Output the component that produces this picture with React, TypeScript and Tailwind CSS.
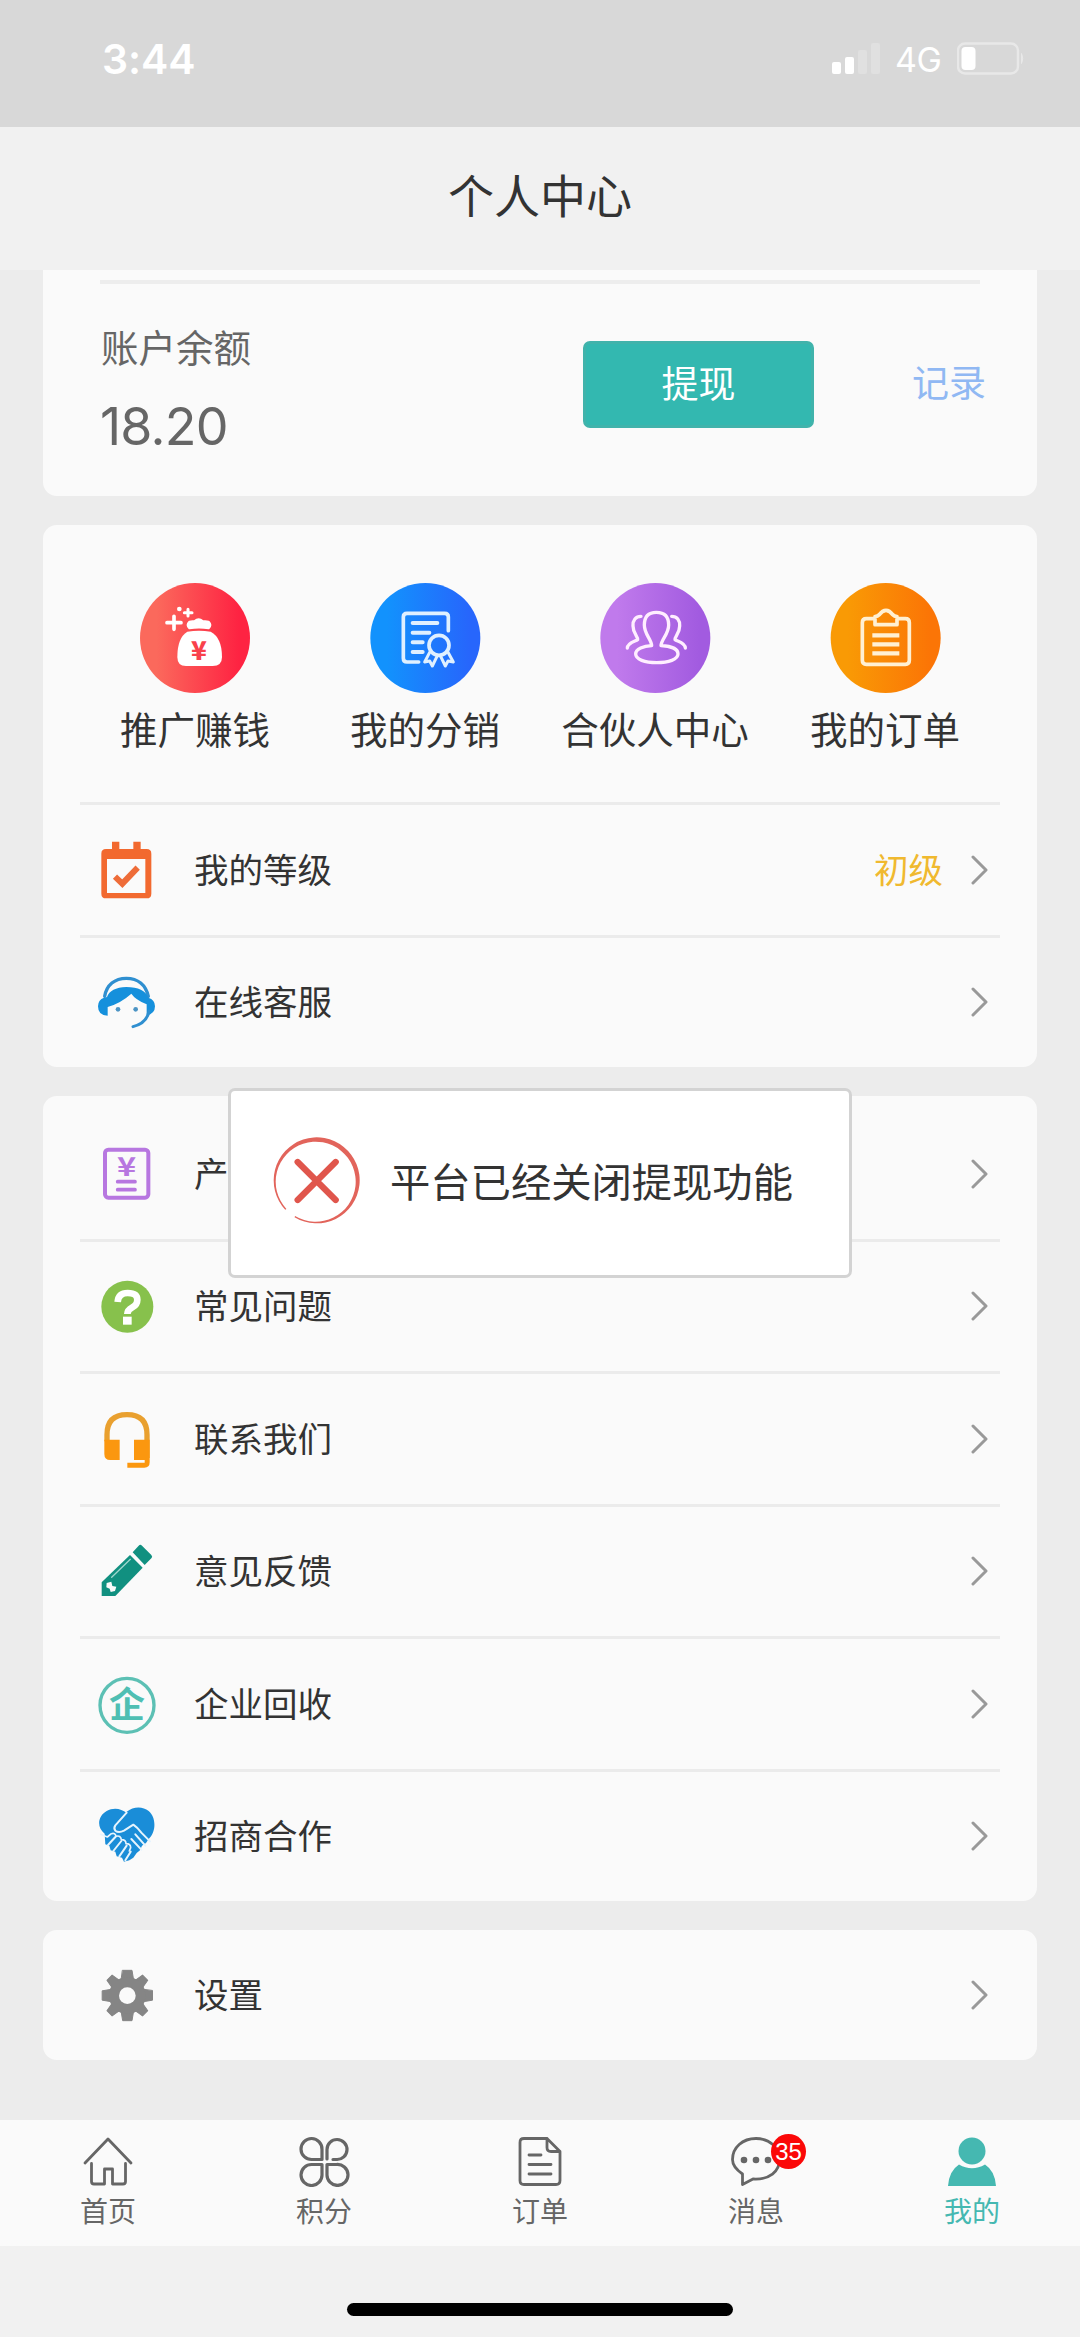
import type { ReactNode } from 'react';

const CJK = "font-['Noto_Sans_CJK_SC',sans-serif]";

/* ---------- status bar ---------- */

function StatusBar() {
  return (
    <div className="flex h-[127px] items-start justify-between bg-[#d8d8d8] pl-[102px] pr-[55px] text-white">
      <span className="mt-[36px] font-['Inter',sans-serif] text-[41px] leading-[46px] font-semibold tracking-[-0.1px]">3:44</span>
      <div className="mt-[42px] flex items-start">
        <svg className="mt-px block h-[32px] w-[48px]" viewBox="0 0 48 32">
          <rect x="0" y="19" width="9" height="12" rx="2" fill="#fff" />
          <rect x="13" y="14" width="9" height="17" rx="2" fill="#fff" />
          <rect x="26" y="7" width="9" height="24" rx="2" fill="#e0e0e0" />
          <rect x="39" y="0" width="9" height="31" rx="2" fill="#e0e0e0" />
        </svg>
        <span className="mr-[16px] ml-[15px] w-[46px] font-['Inter',sans-serif] text-[34px] leading-[36px] tracking-[-0.5px]">4G</span>
        <svg className="block h-[34px] w-[68px]" viewBox="0 0 68 34">
          <rect x="1" y="1.5" width="60" height="30" rx="7" fill="none" stroke="#e8e8e8" strokeWidth="2.4" />
          <rect x="4.500" y="5" width="14" height="23" rx="4" fill="#fff" />
          <path d="M64.500 11.500q2.500 5 0 10z" fill="#e8e8e8" stroke="#e8e8e8" />
        </svg>
      </div>
    </div>
  );
}

/* ---------- shortcut icons ---------- */

function Disc({ id, from, to, viewBox, cx, cy, children }: { id: string; from: string; to: string; viewBox: string; cx: number; cy: number; children: ReactNode }) {
  return (
    <svg className="block size-[112px]" viewBox={viewBox} fill="none" strokeLinecap="round" strokeLinejoin="round">
      <defs>
        <linearGradient id={id}>
          <stop offset="0.150" stopColor={from} />
          <stop offset="0.900" stopColor={to} />
        </linearGradient>
      </defs>
      <circle cx={cx} cy={cy} r="165" fill={`url(#${id})`} />
      {children}
    </svg>
  );
}

const BagIcon = (
  <Disc id="gRed" from="#fb695c" to="#fe2342" viewBox="117 65 336 336" cx={285} cy={233}>
    <g stroke="#fff" strokeWidth="11">
      <path d="M222 168v39M201 187h42" />
      <path d="M264 147v20M253 157h23" strokeWidth="9" />
    </g>
    <circle cx="238" cy="146" r="7" fill="#fff" />
    <path d="M268 184q12-1 16-2 12-10 24 0 6 1 18 2 10 10 0 20-29-5-58 0-10-10 0-20z" fill="#fff" stroke="#fff" strokeWidth="6" />
    <path d="M262 214q35-6 70 0 34 18 34 76 0 27-28 27h-80q-26 0-26-27 0-58 30-76z" fill="#fff" />
    <text x="297" y="298" textAnchor="middle" fontFamily="Noto Sans CJK SC" fontWeight="900" fontSize="78" fill="#f9414b">¥</text>
  </Disc>
);

const CertificateIcon = (
  <Disc id="gBlue" from="#1292fd" to="#2766fc" viewBox="806 65 336 336" cx={975} cy={233}>
    <path d="M1044 211v-41q0-11-11-11H920q-11 0-11 11v124q0 11 11 11h35" stroke="#dff0ff" strokeWidth="11" />
    <path d="M937 188h74M937 217h50M937 246h30M937 275h30" stroke="#dff0ff" strokeWidth="12" />
    <circle cx="1016" cy="255" r="30" stroke="#dff0ff" strokeWidth="11" />
    <path d="M988 276l-15 29 15-3 8 15 14-29M1043 276l16 29-16-3-8 15-14-29" stroke="#dff0ff" strokeWidth="9" />
  </Disc>
);

const PartnersIcon = (
  <Disc id="gPurple" from="#c07aec" to="#a25be0" viewBox="177 65 336 336" cx={346} cy={233}>
    <g stroke="#ffeeff" strokeWidth="10">
      <path d="M335 256c-1-20-22-34-22-62 0-28 15-38 36-38s37 10 37 38c0 28-22 42-23 62 28 1 51 9 51 25 0 16-28 26-64 26s-63-10-63-26c0-16 24-24 48-25z" />
      <path d="M303 168c-16 0-25 12-24 29 0 24 16 33 14 41-7 5-30 8-31 25" />
      <path d="M395 168c16 0 25 12 24 29 0 24-16 33-14 41 7 5 30 8 31 25" />
    </g>
  </Disc>
);

const ClipboardIcon = (
  <Disc id="gOrange" from="#f99a05" to="#fb7506" viewBox="868 65 336 336" cx={1038} cy={233}>
    <g stroke="#fff0d2">
      <path d="M1000 175h-20q-12 0-12 12v113q0 12 12 12h117q12 0 12-12V187q0-12-12-12h-20" strokeWidth="11" />
      <path d="M1006 193v-24q8-1 13-6 9-13 20-13t20 13q5 5 13 6v24z" strokeWidth="11" />
      <path d="M998 225h81M998 252h81M998 279h81" strokeWidth="13" strokeLinecap="butt" />
    </g>
  </Disc>
);

const shortcuts = [
  { label: '推广赚钱', icon: BagIcon },
  { label: '我的分销', icon: CertificateIcon },
  { label: '合伙人中心', icon: PartnersIcon },
  { label: '我的订单', icon: ClipboardIcon },
];

/* ---------- row icons ---------- */

function RowSvg({ viewBox, children }: { viewBox: string; children: ReactNode }) {
  return (
    <svg className="block size-[60px] shrink-0" viewBox={viewBox} fill="none" strokeLinecap="round" strokeLinejoin="round">
      {children}
    </svg>
  );
}

const LevelIcon = (
  <RowSvg viewBox="111 177 180 180">
    <path fillRule="evenodd" d="M156 182h22v22h42v-22h22v22h18q14 0 14 14v120q0 14-14 14H138q-14 0-14-14V218q0-14 14-14h18zM141 234v102h115V234z" fill="#f2692f" />
    <path d="M165 287l22 21 46-48" stroke="#ee6c38" strokeWidth="18" strokeLinecap="butt" strokeLinejoin="miter" />
  </RowSvg>
);

const AgentIcon = (
  <RowSvg viewBox="111 575 180 180">
    <path d="M134 648c6-34 30-54 65-54s58 20 66 54" stroke="#2f8fd0" strokeWidth="10" />
    <path d="M132 652q-18 6-18 26 0 28 29 28v-26q40-12 71-40 12 18 46 32v34q25-6 25-28 0-20-20-26-12-32-66-32-48 2-58 30z" fill="#1590dc" />
    <path d="M267 692q-6 36-48 47" stroke="#2f8fd0" strokeWidth="9" />
    <circle cx="174" cy="687" r="7" fill="#4c94c4" />
    <circle cx="227" cy="687" r="7" fill="#4c94c4" />
  </RowSvg>
);

const ReceiptIcon = (
  <RowSvg viewBox="81 75 180 180">
    <rect x="105" y="92" width="130" height="144" rx="10" stroke="#b777e0" strokeWidth="12" />
    <path d="M143 188h52M143 212h52" stroke="#b777e0" strokeWidth="11" />
    <g transform="translate(170 0) scale(1.250 1)">
      <text x="0" y="171" textAnchor="middle" fontFamily="Noto Sans CJK SC" fontWeight="700" fontSize="78" fill="#b777e0">¥</text>
    </g>
  </RowSvg>
);

const HelpIcon = (
  <RowSvg viewBox="81 470 180 180">
    <circle cx="172" cy="562" r="78" fill="#87c14c" />
    <path d="M143 548q2-27 30-27 29 0 29 20 0 15-15 23-15 8-15 20" stroke="#fff" strokeWidth="20" strokeLinecap="butt" />
    <rect x="159" y="592" width="26" height="24" fill="#fff" />
  </RowSvg>
);

const HeadsetIcon = (
  <RowSvg viewBox="81 868 180 180">
    <path d="M111 965v-20q0-60 60-60t60 60v70" stroke="#e9a02f" strokeWidth="16" strokeLinecap="butt" />
    <path d="M103 960h46v61h-28q-18 0-18-18zM192 960h47v68q0 16-16 16h-51v-15h52v-8h-32z" fill="#fb970f" />
  </RowSvg>
);

const PencilIcon = (
  <RowSvg viewBox="81 96 180 180">
    <path d="M206 110q5-5 10 0l28 28q5 5 0 10l-20 20-36-38z" fill="#119080" />
    <path d="M180 138l38 38-82 85H95v-41z" fill="#119080" />
    <path d="M125 205l56-54" stroke="#9fd6cd" strokeWidth="4" />
    <path d="M110 222l14-4 3 13 12 2-4 13-13 3-3-10-10-4z" fill="#fafafa" />
  </RowSvg>
);

const EnterpriseIcon = (
  <RowSvg viewBox="81 493 180 180">
    <circle cx="171" cy="587" r="81" stroke="#5cc0b4" strokeWidth="10" />
    <text x="171" y="626" textAnchor="middle" fontFamily="Noto Sans CJK SC" fontWeight="700" fontSize="108" fill="#4fbfb3">企</text>
  </RowSvg>
);

const HandshakeIcon = (
  <RowSvg viewBox="81 891 180 180">
    <path d="M170 912c-16-14-40-18-60-6-28 16-30 50-6 68l2 32 12 4 4 14 14 4 4 14 16 4 6 12 16-4 12-8 10-14 10-8 6-14 12-8 8-12c24-22 22-66 0-84-18-15-46-14-66 2z" fill="#1a8dd8" />
    <path d="M170 911l-34 38q-6 9 0 16 10 8 26 0l28-18q12 8 24 24l26 26" stroke="#e6f4fd" strokeWidth="6" />
    <path d="M92 976q10 4 20 8l12-10q12-4 14 8 14-4 16 10 14 0 14 12 14 0 14 12l-4 10" stroke="#e6f4fd" strokeWidth="5" />
    <path d="M114 1008l22-24M130 1026l24-30M148 1042l22-32M166 1054l16-26M196 976l30 34M184 990l30 32" stroke="#e6f4fd" strokeWidth="6" />
  </RowSvg>
);

const GearIcon = (
  <RowSvg viewBox="81 195 180 180">
    <g fill="#858585" stroke="#858585" strokeWidth="3">
      {[0, 90].map((a) => (
        <path key={a} d="M158 211h28l4 24v103l-4 24h-28l-4-24V235z" transform={`rotate(${a} 172 286.500)`} />
      ))}
      {[45, 135].map((a) => (
        <path key={a} d="M161 211h22l4 24v103l-4 24h-22l-4-24V235z" transform={`rotate(${a} 172 286.500)`} />
      ))}
      <circle cx="172" cy="286.500" r="54" />
    </g>
    <circle cx="172" cy="287" r="25" fill="#fafafa" />
  </RowSvg>
);

function Chevron() {
  return (
    <svg className="mr-[11px] block h-[30px] w-[18px]" viewBox="0 0 18 30" fill="none">
      <path d="M2 2l13 13L2 28" stroke="#999" strokeWidth="3" strokeLinecap="round" strokeLinejoin="round" />
    </svg>
  );
}

function Row({ icon, label, value, last }: { icon: ReactNode; label: string; value?: string; last?: boolean }) {
  return (
    <div className={last ? '' : 'border-b-[3px] border-[#ebebeb]'}>
      <div className="flex h-[129.500px] items-center pl-[17px]">
        {icon}
        <span className="-mt-[4px] ml-[37px] flex-1 text-[34.500px] leading-[40px] text-[#333]">{label}</span>
        {value && <span className="-mt-[4px] mr-[28px] text-[34.500px] leading-[40px] text-[#f0b92f]">{value}</span>}
        <Chevron />
      </div>
    </div>
  );
}

/* ---------- tab bar ---------- */

function TabSvg({ children }: { children: ReactNode }) {
  return (
    <svg className="block size-[52px]" viewBox="0 0 52 52" fill="none" stroke="#666" strokeWidth="2.800" strokeLinecap="round" strokeLinejoin="round">
      {children}
    </svg>
  );
}

const HomeTab = (
  <TabSvg>
    <path d="M3 28L26 4l23 24M9.500 28.500v18q0 2.500 2.500 2.500h10.500V34h8v15h10.500q2.500 0 2.500-2.500v-18" />
  </TabSvg>
);

const CloverTab = (
  <TabSvg>
    <g strokeWidth="3.200">
      <path d="M24 24.500H14A10.500 10.500 0 1 1 24 14.500z" />
      <path d="M29 24V14.500A10 10 0 1 1 38.500 24.500H35" />
      <path d="M24 29.500v10A10.500 10.500 0 1 1 14 29.500z" />
      <path d="M29 29.500h9.500A10.500 10.500 0 1 1 29 39.500z" />
    </g>
  </TabSvg>
);

const OrderTab = (
  <TabSvg>
    <path d="M33 3.500H10q-4 0-4 4v38q0 4 4 4h32q4 0 4-4v-29zM33 3.500v9q0 4 4 4h9M15 20h12M15 29.500h22M15 39h22" />
  </TabSvg>
);

const MessageTab = (
  <TabSvg>
    <path d="M12.500 49.500V39C6 34.500 2.500 30 2.500 24.500 2.500 12.500 12.500 3.500 26 3.500s23.500 9 23.500 21S39.500 45 23 44z" />
    <g fill="#666" stroke="none">
      <circle cx="14" cy="25" r="3.300" />
      <circle cx="26" cy="25" r="3.300" />
      <circle cx="38" cy="25" r="3.300" />
    </g>
  </TabSvg>
);

const MeTab = (
  <TabSvg>
    <g fill="#45b8b1" stroke="none">
      <circle cx="26" cy="16" r="13.500" />
      <path d="M13 29.500q13 7.500 26 0Q49 36 50 51H2Q3 36 13 29.500z" />
    </g>
  </TabSvg>
);

const tabs = [
  { label: '首页', icon: HomeTab },
  { label: '积分', icon: CloverTab },
  { label: '订单', icon: OrderTab },
  { label: '消息', icon: MessageTab, badge: '35' },
  { label: '我的', icon: MeTab, active: true },
];

function TabBar() {
  return (
    <nav className="grid h-[126px] grid-cols-5 bg-[#fafafa]">
      {tabs.map((t) => (
        <div key={t.label} className="flex flex-col items-center pt-[15px]">
          <div className="relative">
            {t.icon}
            {t.badge && (
              <span className="absolute -top-[1px] left-[41px] flex size-[35px] items-center justify-center rounded-full bg-[#fb0808] font-['Liberation_Sans',sans-serif] text-[24px] leading-none text-white">
                {t.badge}
              </span>
            )}
          </div>
          <span className={t.active ? 'mt-[6px] text-[28px] leading-[34px] text-[#45b8b1]' : 'mt-[6px] text-[28px] leading-[34px] text-[#666]'}>{t.label}</span>
        </div>
      ))}
    </nav>
  );
}

/* ---------- toast ---------- */

function Toast() {
  return (
    <div className="absolute top-[1088px] left-[228px] flex h-[190px] w-[624px] items-center rounded-[7px] border-[3px] border-[#d3d3d3] bg-white pl-[42px]">
      <svg className="-mt-[6px] block size-[88px] shrink-0" viewBox="609 46 264 264" fill="none">
        {/* brush-like ring: thick at the upper right, tapering toward the gap */}
        <path
          d="M645.700 267A129 129 0 1 1 673.600 289.600L675.200 285.900A120 120 0 1 0 649.200 264.800Z"
          fill="#e2645b"
        />
        <path d="M683 124L797 238M797 124L683 238" stroke="#e0564c" strokeWidth="19" strokeLinecap="round" />
      </svg>
      <span className="-mt-[6px] ml-[29px] text-[40.300px] leading-[48px] whitespace-nowrap text-[#333]">平台已经关闭提现功能</span>
    </div>
  );
}

export default function App() {
  return (
    <div className={`relative flex h-[2337px] w-[1080px] flex-col overflow-hidden bg-[#ececec] ${CJK}`}>
      <StatusBar />
      <header className="flex h-[143px] items-center justify-center bg-[#f1f1f1]">
        <h1 className="-mt-[11px] text-[46px] leading-[60px] text-[#333]">个人中心</h1>
      </header>

      <main className="flex flex-1 flex-col gap-[29px] px-[43px]">
        <section className="h-[226px] rounded-b-[14px] bg-[#fafafa] px-[57px] pt-[10px]">
          <div className="h-[4px] bg-[#ededed]" />
          <div className="flex">
            <div className="w-[483px] shrink-0 pt-[40px] text-[#666]">
              <div className="pl-px text-[37.500px] leading-[44px]">账户余额</div>
              <div className="mt-[29px] font-['Inter',sans-serif] text-[52px] leading-[60px] tracking-[-0.8px]">18.20</div>
            </div>
            <button className="mt-[57px] h-[87px] w-[231px] shrink-0 rounded-[7px] border-[3px] border-[#40b3ab] bg-[#33b8b0] pb-[6px] text-[37px] leading-[40px] text-white">提现</button>
            <span className="mt-[75px] ml-[98px] text-[37px] leading-[44px] whitespace-nowrap text-[#90b8f3]">记录</span>
          </div>
        </section>

        <section className="rounded-[14px] bg-[#fafafa] px-[37px]">
          <div className="grid h-[280px] grid-cols-4 border-b-[3px] border-[#ebebeb] pt-[57px]">
            {shortcuts.map((s) => (
              <div key={s.label} className="flex flex-col items-center">
                {s.icon}
                <span className="mt-[12px] text-[37.500px] leading-[44px] whitespace-nowrap text-[#333]">{s.label}</span>
              </div>
            ))}
          </div>
          <Row icon={LevelIcon} label="我的等级" value="初级" />
          <Row icon={AgentIcon} label="在线客服" last />
        </section>

        <section className="rounded-[14px] bg-[#fafafa] px-[37px] pt-[13px]">
          <Row icon={ReceiptIcon} label="产品回收" />
          <Row icon={HelpIcon} label="常见问题" />
          <Row icon={HeadsetIcon} label="联系我们" />
          <Row icon={PencilIcon} label="意见反馈" />
          <Row icon={EnterpriseIcon} label="企业回收" />
          <Row icon={HandshakeIcon} label="招商合作" last />
        </section>

        <section className="rounded-[14px] bg-[#fafafa] px-[37px]">
          <Row icon={GearIcon} label="设置" last />
        </section>
      </main>

      <TabBar />
      <div className="flex h-[91px] justify-center bg-[#f1f1f1] pt-[57px]">
        <div className="h-[13px] w-[386px] rounded-full bg-black" />
      </div>
      <Toast />
    </div>
  );
}
